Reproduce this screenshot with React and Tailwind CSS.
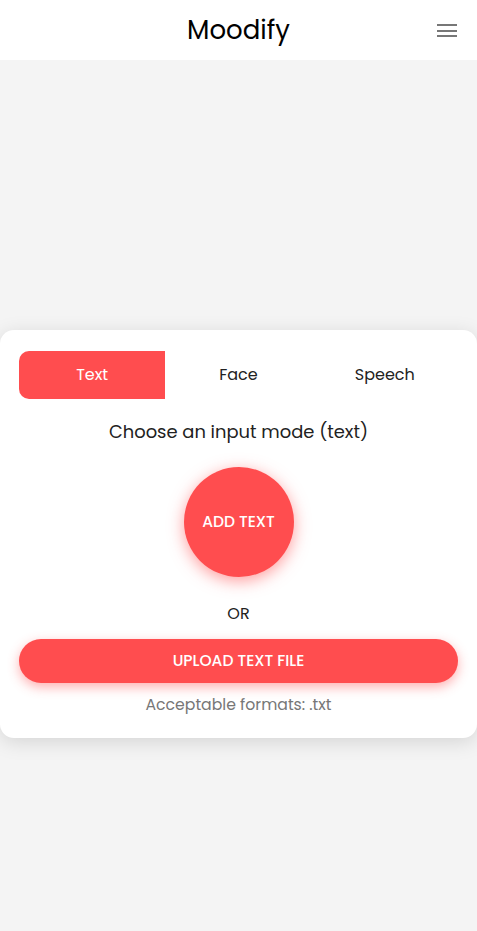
import { useState } from "react";

const tabs = ["Text", "Face", "Speech"];

export default function App() {
  const [mode, setMode] = useState("Text");

  return (
    <div className="min-h-[931px] bg-[#f4f4f4] font-['Poppins','Open_Sans',sans-serif] text-[#222]">
      <header className="relative flex h-[60px] items-center justify-center bg-white">
        <h1 className="text-[26px] font-normal leading-[34px] text-black">Moodify</h1>
        <button aria-label="Menu" className="absolute right-[20px] top-[24px] flex w-[20px] flex-col gap-[3.5px]">
          <span className="h-[2px] w-full bg-[#777]" />
          <span className="h-[2px] w-full bg-[#777]" />
          <span className="h-[2px] w-full bg-[#777]" />
        </button>
      </header>

      <main className="pt-[270px]">
        <section className="rounded-[14px] bg-white px-[19px] pt-[21px] pb-[21px] shadow-[0_4px_20px_rgba(0,0,0,0.13)]">
          <div className="flex">
            {tabs.map((t) => (
              <button
                key={t}
                onClick={() => setMode(t)}
                className={
                  mode === t
                    ? "h-[48px] flex-1 rounded-l-[10px] bg-[#ff4d4f] text-[16px] text-white"
                    : "h-[48px] flex-1 text-[16px] text-[#222]"
                }
              >
                {t}
              </button>
            ))}
          </div>

          <p className="mt-[19px] text-center text-[17.9px] leading-[27px] text-[#222]">
            Choose an input mode ({mode.toLowerCase()})
          </p>

          <div className="mt-[22px] flex justify-center">
            <button className="flex h-[110px] w-[110px] items-center justify-center rounded-full bg-[#ff4d4f] text-[15.5px] font-medium uppercase text-white shadow-[0_4px_16px_rgba(255,77,79,0.55)]">
              Add Text
            </button>
          </div>

          <p className="mt-[25px] text-center text-[16px] leading-[24px] text-[#222]">OR</p>

          <button className="mt-[13px] block h-[44px] w-full rounded-full bg-[#ff4d4f] text-[15.5px] font-medium uppercase text-white shadow-[0_4px_12px_rgba(255,77,79,0.45)]">
            Upload Text File
          </button>

          <p className="mt-[10px] text-center text-[15.7px] leading-[24px] text-[#777]">Acceptable formats: .txt</p>
        </section>
      </main>
    </div>
  );
}
